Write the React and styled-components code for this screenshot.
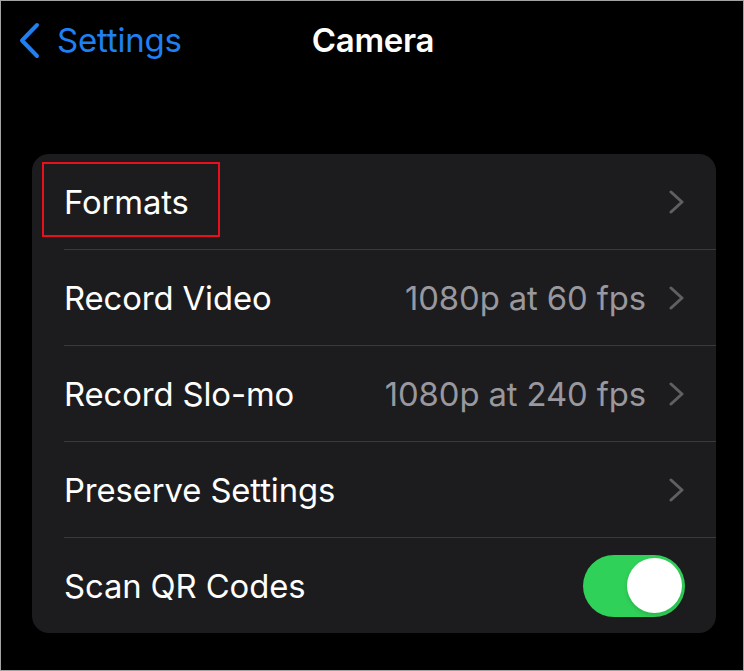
import React from "react";
import styled, { createGlobalStyle } from "styled-components";

const Global = createGlobalStyle`
  html, body { margin: 0; padding: 0; background: #000; }
  body { font-family: Inter, "Noto Sans", sans-serif; -webkit-font-smoothing: antialiased; }
  * { box-sizing: border-box; }
`;

const Screen = styled.div`
  width: 744px;
  height: 671px;
  background: #000;
  border: 1px solid #a3a3a3;
  display: flex;
  flex-direction: column;
  overflow: hidden;
`;

const NavBar = styled.div`
  height: 78px;
  display: grid;
  grid-template-columns: 1fr auto 1fr;
  align-items: center;
`;

const BackButton = styled.div`
  display: flex;
  align-items: center;
  gap: 17px;
  padding-left: 17px;
  color: #1f80f4;
  font-size: 33px;
  letter-spacing: -0.2px;
`;

const Title = styled.div`
  color: #fff;
  font-size: 33px;
  font-weight: 600;
  letter-spacing: -0.3px;
  transform: translateX(1px);
`;

const Card = styled.div`
  margin: 75px 27px 0 31px;
  background: #1c1c1e;
  border-radius: 17px;
  display: flex;
  flex-direction: column;
`;

const Row = styled.div`
  position: relative;
  padding-left: 32px;
  height: ${(p) => (p.$first ? 95 : 96)}px;
`;

const RowInner = styled.div`
  height: 100%;
  display: flex;
  align-items: center;
  padding-right: 32px;
  border-top: ${(p) => (p.$first ? "none" : "1px solid #3a3a3c")};
`;

const Label = styled.div`
  flex: 1;
  color: #fff;
  font-size: 32.8px;
  letter-spacing: -0.1px;
`;

const Value = styled.div`
  color: #98989e;
  font-size: 32.8px;
  letter-spacing: -0.1px;
  margin-right: 23px;
`;

const Highlight = styled.div`
  position: absolute;
  left: 10px;
  top: 8px;
  width: 178px;
  height: 75px;
  border: 2.5px solid #e8101c;
  pointer-events: none;
`;

const Toggle = styled.div`
  width: 102px;
  height: 62px;
  border-radius: 31px;
  background: #30d158;
  display: flex;
  align-items: center;
  justify-content: flex-end;
  padding-right: 3px;
  margin-right: -1px;
`;

const Knob = styled.div`
  width: 55px;
  height: 55px;
  border-radius: 50%;
  background: #fff;
  box-shadow: 0 2px 4px rgba(0, 0, 0, 0.15);
`;

const Chevron = ({ color = "#5f5f64", w = 15, h = 24, sw = 3 }) => (
  <svg width={w} height={h} viewBox={`0 0 ${w} ${h}`} fill="none">
    <path
      d={`M${sw / 2 + 0.5} ${sw / 2 + 0.5} L${w - sw / 2 - 0.5} ${h / 2} L${sw / 2 + 0.5} ${h - sw / 2 - 0.5}`}
      stroke={color}
      strokeWidth={sw}
      strokeLinecap="round"
      strokeLinejoin="round"
    />
  </svg>
);

const BackChevron = () => (
  <svg width="22" height="37" viewBox="0 0 22 37" fill="none">
    <path d="M19 3 L4 18.5 L19 34" stroke="#1f80f4" strokeWidth="4" strokeLinecap="round" strokeLinejoin="round" />
  </svg>
);

const rows = [
  { label: "Formats", chevron: true, highlight: true },
  { label: "Record Video", value: "1080p at 60 fps", chevron: true },
  { label: "Record Slo-mo", value: "1080p at 240 fps", chevron: true },
  { label: "Preserve Settings", chevron: true },
  { label: "Scan QR Codes", toggle: true },
];

export default function App() {
  return (
    <>
      <Global />
      <Screen>
        <NavBar>
          <BackButton>
            <BackChevron />
            Settings
          </BackButton>
          <Title>Camera</Title>
          <div />
        </NavBar>
        <Card>
          {rows.map((r, i) => (
            <Row key={r.label} $first={i === 0}>
              <RowInner $first={i === 0}>
                <Label>{r.label}</Label>
                {r.value && <Value>{r.value}</Value>}
                {r.chevron && <Chevron />}
                {r.toggle && (
                  <Toggle>
                    <Knob />
                  </Toggle>
                )}
              </RowInner>
              {r.highlight && <Highlight />}
            </Row>
          ))}
        </Card>
      </Screen>
    </>
  );
}
